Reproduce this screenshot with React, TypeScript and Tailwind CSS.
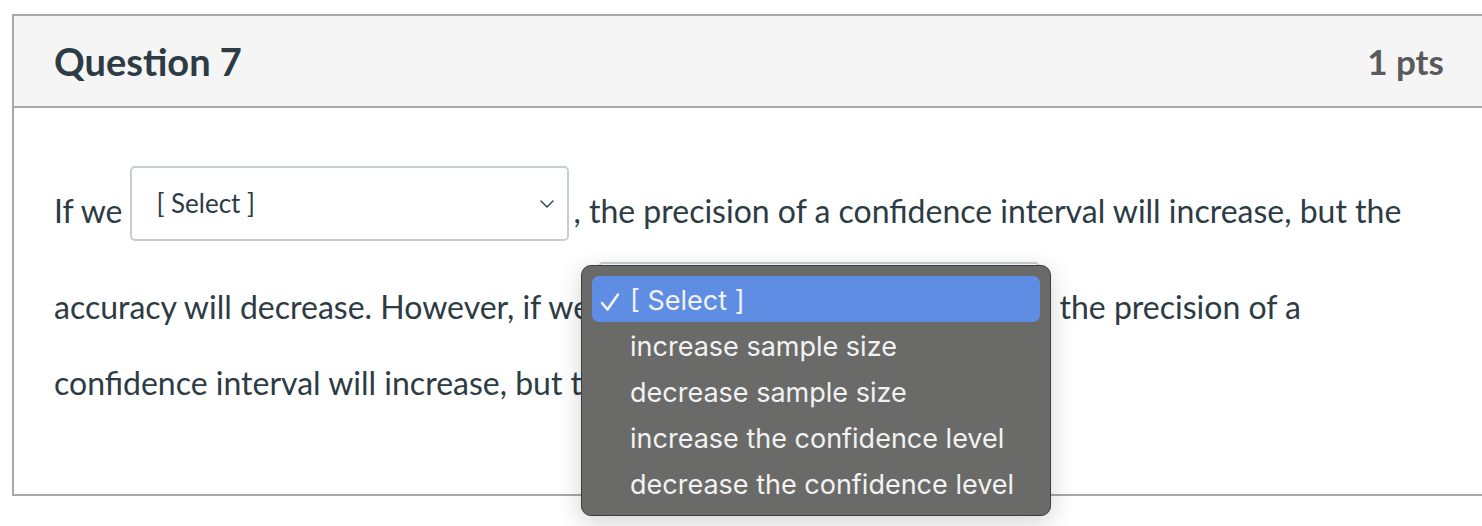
import React from 'react';

const OPTIONS = [
  '[ Select ]',
  'increase sample size',
  'decrease sample size',
  'increase the confidence level',
  'decrease the confidence level',
];

function SelectBox({ width, showLabel = true }: { width: string; showLabel?: boolean }) {
  return (
    <div
      className={`${width} flex h-[75px] shrink-0 items-center justify-between rounded-[5px] border-2 border-[#c7cdd1] bg-white pl-[24px] pr-[12px]`}
    >
      {showLabel && <span className="text-[26px] text-[#2d3b45]">[ Select ]</span>}
      <svg width="14" height="8" viewBox="0 0 14 8" fill="none" className="mr-[1px]">
        <path d="M1 1l6 6 6-6" stroke="#2d3b45" strokeWidth="1.4" strokeLinecap="round" strokeLinejoin="round" />
      </svg>
    </div>
  );
}

function Dropdown() {
  return (
    <div className="absolute left-[567px] top-[157px] w-[470px] rounded-[10px] border border-[#3d3d3c] bg-[#6a6b68] px-[10px] pb-[9px] pt-[10px] shadow-[0_6px_24px_rgba(0,0,0,0.18)] font-['Inter',sans-serif]">
      {OPTIONS.map((opt, i) => (
        <div
          key={opt}
          className={`flex h-[46px] items-center rounded-[7px] pt-[5px] text-[27px] text-[#f2f2f2] ${
            i === 0 ? 'bg-[#5f8de4]' : ''
          }`}
        >
          <span className="flex w-[38px] shrink-0 items-center pl-[8px]">
            {i === 0 && (
              <svg width="20" height="20" viewBox="0 0 20 20" fill="none">
                <path d="M2 11l5.5 6.5L18 2.5" stroke="#f2f2f2" strokeWidth="2.6" strokeLinecap="round" strokeLinejoin="round" />
              </svg>
            )}
          </span>
          <span>{opt}</span>
        </div>
      ))}
    </div>
  );
}

export default function App() {
  return (
    <div className="h-[526px] w-[1482px] overflow-hidden bg-white pl-[12px] pt-[14px] font-['Lato',sans-serif] text-[#2d3b45]">
      <div className="w-[1474px] border-2 border-[#a8a8a8]">
        {/* Header */}
        <div className="flex h-[92px] items-center justify-between border-b-2 border-[#a8a8a8] bg-[#f5f5f5] pl-[40px] pr-[40px]">
          <h2 className="text-[38px] font-bold text-[#2d3b45]">Question 7</h2>
          <span className="text-[35px] font-bold text-[#5a5a5a]">1 pts</span>
        </div>

        {/* Body */}
        <div className="relative h-[386px] pl-[40px] pt-[58px] text-[32px]">
          <div className="flex h-[75px] items-center">
            <span className="pt-[15px] pr-[8px]">If we</span>
            <SelectBox width="w-[439px]" />
            <span className="whitespace-nowrap pt-[15px] pl-[4px]">, the precision of a confidence interval will increase, but the</span>
          </div>
          <div className="mt-[21px] flex h-[75px] items-center">
            <span className="whitespace-nowrap pt-[15px] pr-[8px]">accuracy will decrease. However, if we</span>
            <SelectBox width="w-[442px]" showLabel={false} />
            <span className="whitespace-nowrap pt-[15px] pl-[4px]">, the precision of a</span>
          </div>
          <div className="mt-[26px] flex h-[40px] items-center">
            <span className="whitespace-nowrap">confidence interval will increase, but the</span>
          </div>

          <Dropdown />
        </div>
      </div>
    </div>
  );
}
